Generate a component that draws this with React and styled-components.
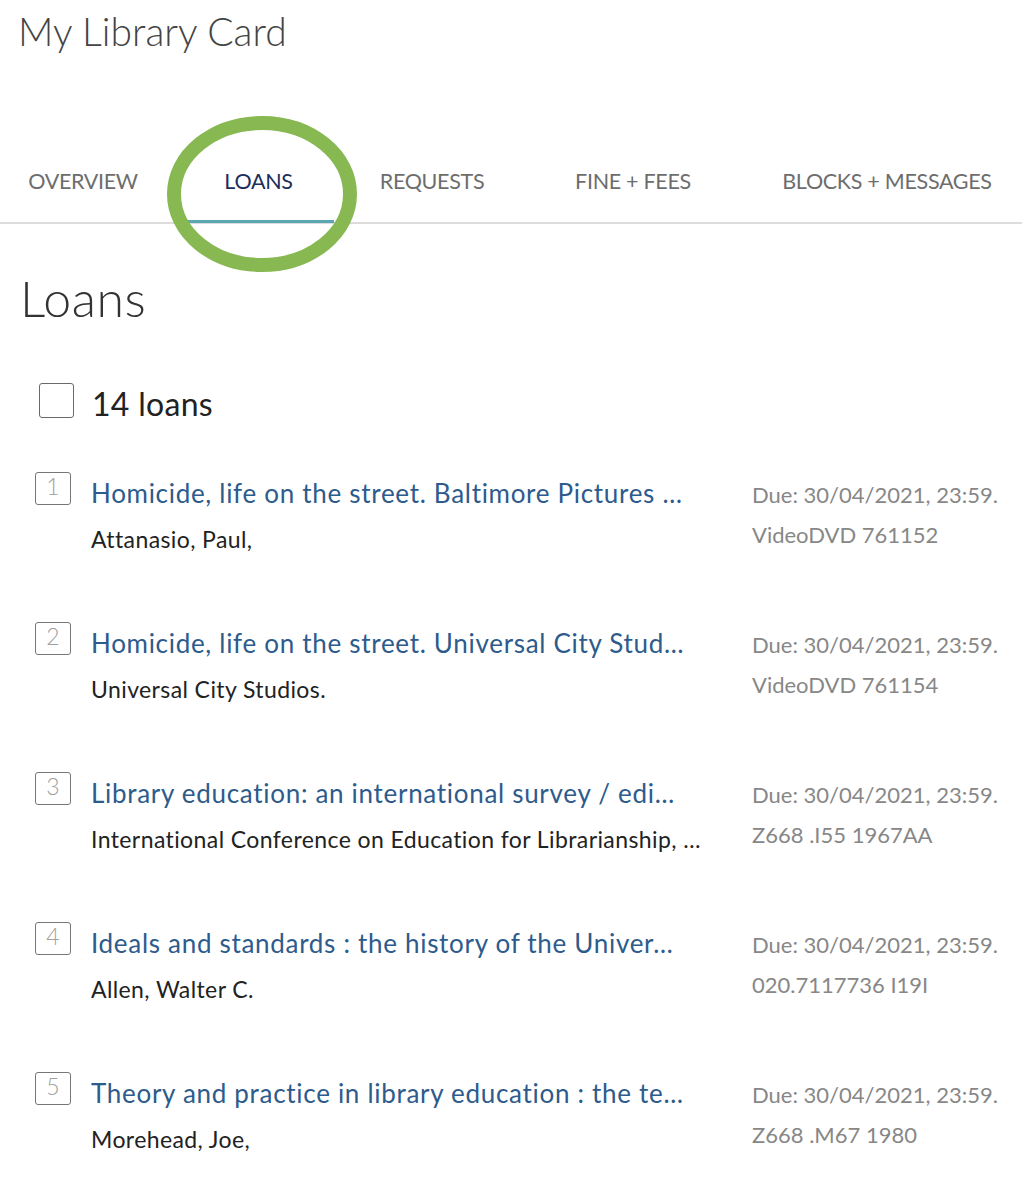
import React from "react";
import styled, { createGlobalStyle } from "styled-components";

const Global = createGlobalStyle`
  html, body { margin: 0; padding: 0; background: #fff; }
  body { font-family: Lato, "Open Sans", "Liberation Sans", sans-serif; }
  * { box-sizing: border-box; }
`;

const Page = styled.div`
  position: relative;
  width: 1022px;
  min-height: 1200px;
  overflow: hidden;
`;

const PageTitle = styled.h1`
  margin: 0;
  padding: 8px 0 0 18px;
  font-size: 39px;
  line-height: 1.2;
  font-weight: 300;
  color: #444;
`;

const TabBar = styled.nav`
  display: flex;
  gap: 8px;
  margin: 114px 0 0 -9px;
  border-bottom: 2px solid #dcdcdc;
`;

const Tab = styled.div`
  flex: 0 0 ${(p) => p.$w}px;
  text-align: center;
  font-size: 21.5px;
  letter-spacing: -0.3px;
  line-height: 1.2;
  text-transform: uppercase;
  white-space: nowrap;
  padding-bottom: 25px;
  color: ${(p) => (p.$active ? "#1b2f5b" : "#6d6d6d")};
  border-bottom: 3px solid ${(p) => (p.$active ? "#5aa6b2" : "transparent")};
  margin-bottom: -1px;
`;

const Highlight = styled.svg`
  position: absolute;
  left: 167px;
  top: 116px;
  pointer-events: none;
`;

const SectionTitle = styled.h2`
  margin: 44px 0 0 20px;
  font-size: 50px;
  letter-spacing: 0.5px;
  line-height: 1.2;
  font-weight: 300;
  color: #333;
`;

const CountRow = styled.div`
  display: flex;
  align-items: flex-start;
  gap: 18px;
  margin: 55px 0 0 39px;
`;

const CheckBox = styled.span`
  display: block;
  width: 35px;
  height: 35px;
  border: 1.5px solid #6a6a6a;
  border-radius: 3px;
`;

const CountLabel = styled.span`
  margin-top: 2px;
  font-size: 32px;
  letter-spacing: 0.3px;
  line-height: 1.2;
  color: #222;
`;

const List = styled.ol`
  list-style: none;
  margin: 49px 0 0 0;
  padding: 0;
`;

const Row = styled.li`
  display: grid;
  grid-template-columns: 36px minmax(0, 1fr) 270px;
  column-gap: 20px;
  height: 150px;
  padding-left: 35px;
`;

const NumBox = styled.span`
  display: flex;
  justify-content: center;
  align-items: flex-start;
  width: 36px;
  height: 33px;
  padding-top: 2px;
  border: 1.5px solid #777;
  border-radius: 3px;
  font-size: 23px;
  line-height: 1;
  font-weight: 300;
  color: #a0a0a0;
`;

const Info = styled.div`
  padding-top: 4px;
  min-width: 0;
`;

const ItemTitle = styled.div`
  max-width: 630px;
  font-size: 26px;
  letter-spacing: 0.7px;
  line-height: 34px;
  color: #2d5b8c;
  white-space: nowrap;
  overflow: hidden;
  text-overflow: ellipsis;
`;

const Author = styled.div`
  max-width: 640px;
  margin-top: 16px;
  font-size: 23px;
  letter-spacing: 0.4px;
  line-height: 1.2;
  color: #222;
  white-space: nowrap;
  overflow: hidden;
  text-overflow: ellipsis;
`;

const Meta = styled.div`
  padding-top: 3px;
  font-size: 22px;
  line-height: 40px;
  color: #878787;
  white-space: nowrap;
`;

const tabs = [
  { label: "Overview", w: 184 },
  { label: "Loans", w: 151, active: true },
  { label: "Requests", w: 180 },
  { label: "Fine + Fees", w: 206 },
  { label: "Blocks + Messages", w: 286 },
];

const loans = [
  {
    title: "Homicide, life on the street. Baltimore Pictures …",
    author: "Attanasio, Paul,",
    call: "VideoDVD 761152",
  },
  {
    title: "Homicide, life on the street. Universal City Stud…",
    author: "Universal City Studios.",
    call: "VideoDVD 761154",
  },
  {
    title: "Library education: an international survey / edi…",
    author: "International Conference on Education for Librarianship, …",
    call: "Z668 .I55 1967AA",
  },
  {
    title: "Ideals and standards : the history of the Univer…",
    author: "Allen, Walter C.",
    call: "020.7117736 I19I",
  },
  {
    title: "Theory and practice in library education : the te…",
    author: "Morehead, Joe,",
    call: "Z668 .M67 1980",
  },
];

export default function App() {
  return (
    <Page>
      <Global />
      <PageTitle>My Library Card</PageTitle>
      <TabBar>
        {tabs.map((t) => (
          <Tab key={t.label} $w={t.w} $active={t.active}>
            {t.label}
          </Tab>
        ))}
      </TabBar>
      <Highlight width="190" height="156" viewBox="0 0 190 156">
        <ellipse cx="95" cy="78" rx="88" ry="71" fill="none" stroke="#87b852" strokeWidth="14" />
      </Highlight>
      <SectionTitle>Loans</SectionTitle>
      <CountRow>
        <CheckBox />
        <CountLabel>14 loans</CountLabel>
      </CountRow>
      <List>
        {loans.map((l, i) => (
          <Row key={i}>
            <NumBox>{i + 1}</NumBox>
            <Info>
              <ItemTitle>{l.title}</ItemTitle>
              <Author>{l.author}</Author>
            </Info>
            <Meta>
              <div>Due: 30/04/2021, 23:59.</div>
              <div>{l.call}</div>
            </Meta>
          </Row>
        ))}
      </List>
    </Page>
  );
}
